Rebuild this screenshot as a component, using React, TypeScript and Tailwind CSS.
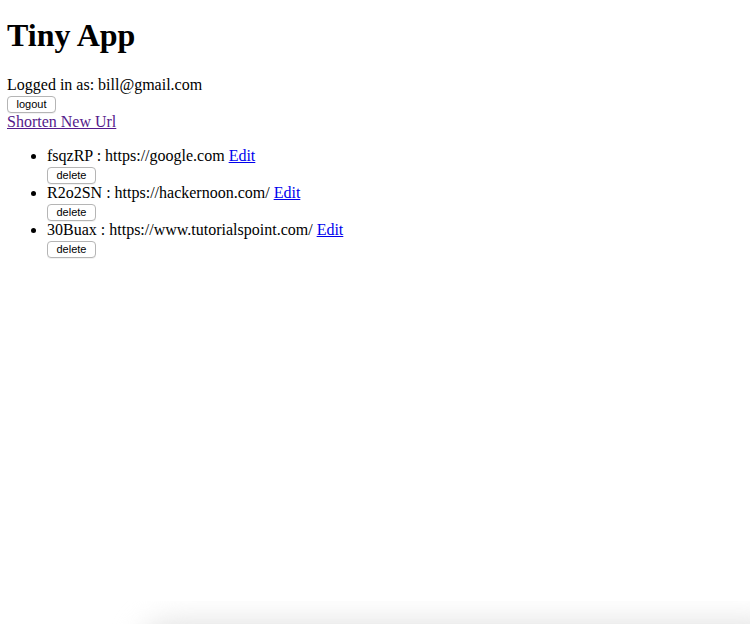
export default function App() {
  const urls = [
    { id: "fsqzRP", url: "https://google.com" },
    { id: "R2o2SN", url: "https://hackernoon.com/" },
    { id: "30Buax", url: "https://www.tutorialspoint.com/" },
  ];
  const btn =
    "block w-[49px] h-[17px] border border-[#b5b5b5] rounded-[4px] bg-white text-[11px] leading-[15px] text-center text-black font-['Liberation_Sans',Arial,sans-serif] shadow-[0_1px_0_rgba(0,0,0,0.05)]";
  return (
    <div className="relative min-h-[624px] bg-white">
      <div className="px-[7px] pb-2 font-['Liberation_Serif','Times_New_Roman',serif] text-base leading-[18px] text-black">
        <h1 className="text-[32px] font-bold leading-[37px] mt-[17px] mb-[22px]">Tiny App</h1>
        <div className="leading-[18px] mb-[2px]">Logged in as: bill@gmail.com</div>
        <form>
          <button type="button" className={btn}>
            logout
          </button>
        </form>
        <a href="#" className="block w-fit text-[#551a8b] underline leading-[17px] mb-[1px]">
          Shorten New Url
        </a>
        <ul className="list-disc pl-10 mt-[17px] mb-4">
          {urls.map((u) => (
            <li key={u.id}>
              <div className="leading-[18px] mb-[2px]">
                {u.id} : {u.url}{" "}
                <a href="#" className="text-[#0000ee] underline">
                  Edit
                </a>
              </div>
              <form>
                <button type="button" className={btn}>
                  delete
                </button>
              </form>
            </li>
          ))}
        </ul>
      </div>
      <div className="pointer-events-none absolute left-[90px] right-0 bottom-0 h-[40px] overflow-hidden">
        <div className="absolute left-[50px] right-[-40px] top-[20px] h-[60px] rounded-[40px] bg-[#e2e2e2] blur-[14px]" />
      </div>
    </div>
  );
}
